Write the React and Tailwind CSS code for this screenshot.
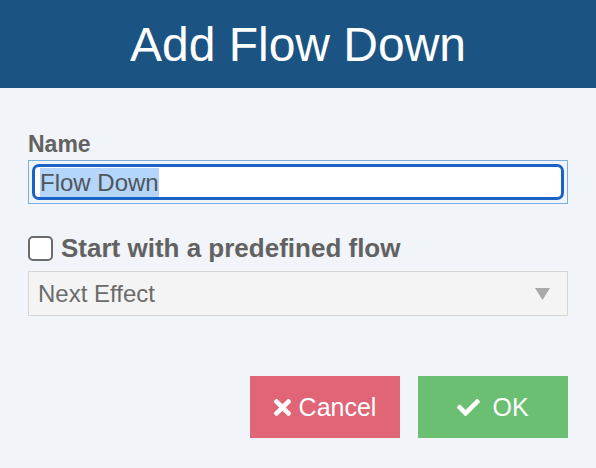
import React from "react";
import { FaTimes, FaCheck } from "react-icons/fa";

function App() {
  return (
    <div className="w-[596px] h-[468px] flex flex-col bg-[#f1f4f8] font-[family-name:'Liberation_Sans',Arial,sans-serif]">
      <div className="h-[88px] bg-[#1b5383] flex items-center justify-center">
        <h1 className="text-white text-[48px] leading-none pt-[2px]">Add Flow Down</h1>
      </div>

      <div className="flex flex-col px-[28px]">
        <label className="mt-[45px] text-[23px] leading-none font-bold text-[#626262]">Name</label>

        <div className="mt-[4px] h-[44px] border border-[#79b0e0] p-[3px]">
          <div className="h-full border-[3px] border-[#1a62c6] rounded-[7px] bg-white flex items-center pl-[5px]">
            <span className="inline-block h-[29px] leading-[29px] text-[24px] text-[#505558] bg-[#b4d6fc]">Flow Down</span>
          </div>
        </div>

        <div className="mt-[31px] flex items-center gap-[8px]">
          <div className="w-[25px] h-[25px] rounded-[5px] border-2 border-[#6b6b6b] bg-white" />
          <span className="text-[26px] leading-none font-bold text-[#626262]">Start with a predefined flow</span>
        </div>

        <div className="mt-[10px] h-[45px] border border-[#d6d6d6] bg-[#f4f4f4] flex items-center justify-between pl-[9px] pr-[17px]">
          <span className="text-[24px] leading-none text-[#6b6b6b]">Next Effect</span>
          <svg width="15" height="12" viewBox="0 0 15 12">
            <path d="M0 0 L15 0 L7.5 12 Z" fill="#a9a9a9" />
          </svg>
        </div>

        <div className="mt-[60px] flex justify-end gap-[18px]">
          <button className="w-[150px] h-[62px] bg-[#e06577] text-white flex items-center justify-center gap-[8px] text-[25px]">
            <FaTimes className="w-[17px] h-[25px]" />
            <span className="leading-none">Cancel</span>
          </button>
          <button className="w-[150px] h-[62px] bg-[#6bbf72] text-white flex items-center justify-center gap-[12px] text-[25px]">
            <FaCheck className="w-[23px] h-[23px]" />
            <span className="leading-none">OK</span>
          </button>
        </div>
      </div>
    </div>
  );
}

export default App;
